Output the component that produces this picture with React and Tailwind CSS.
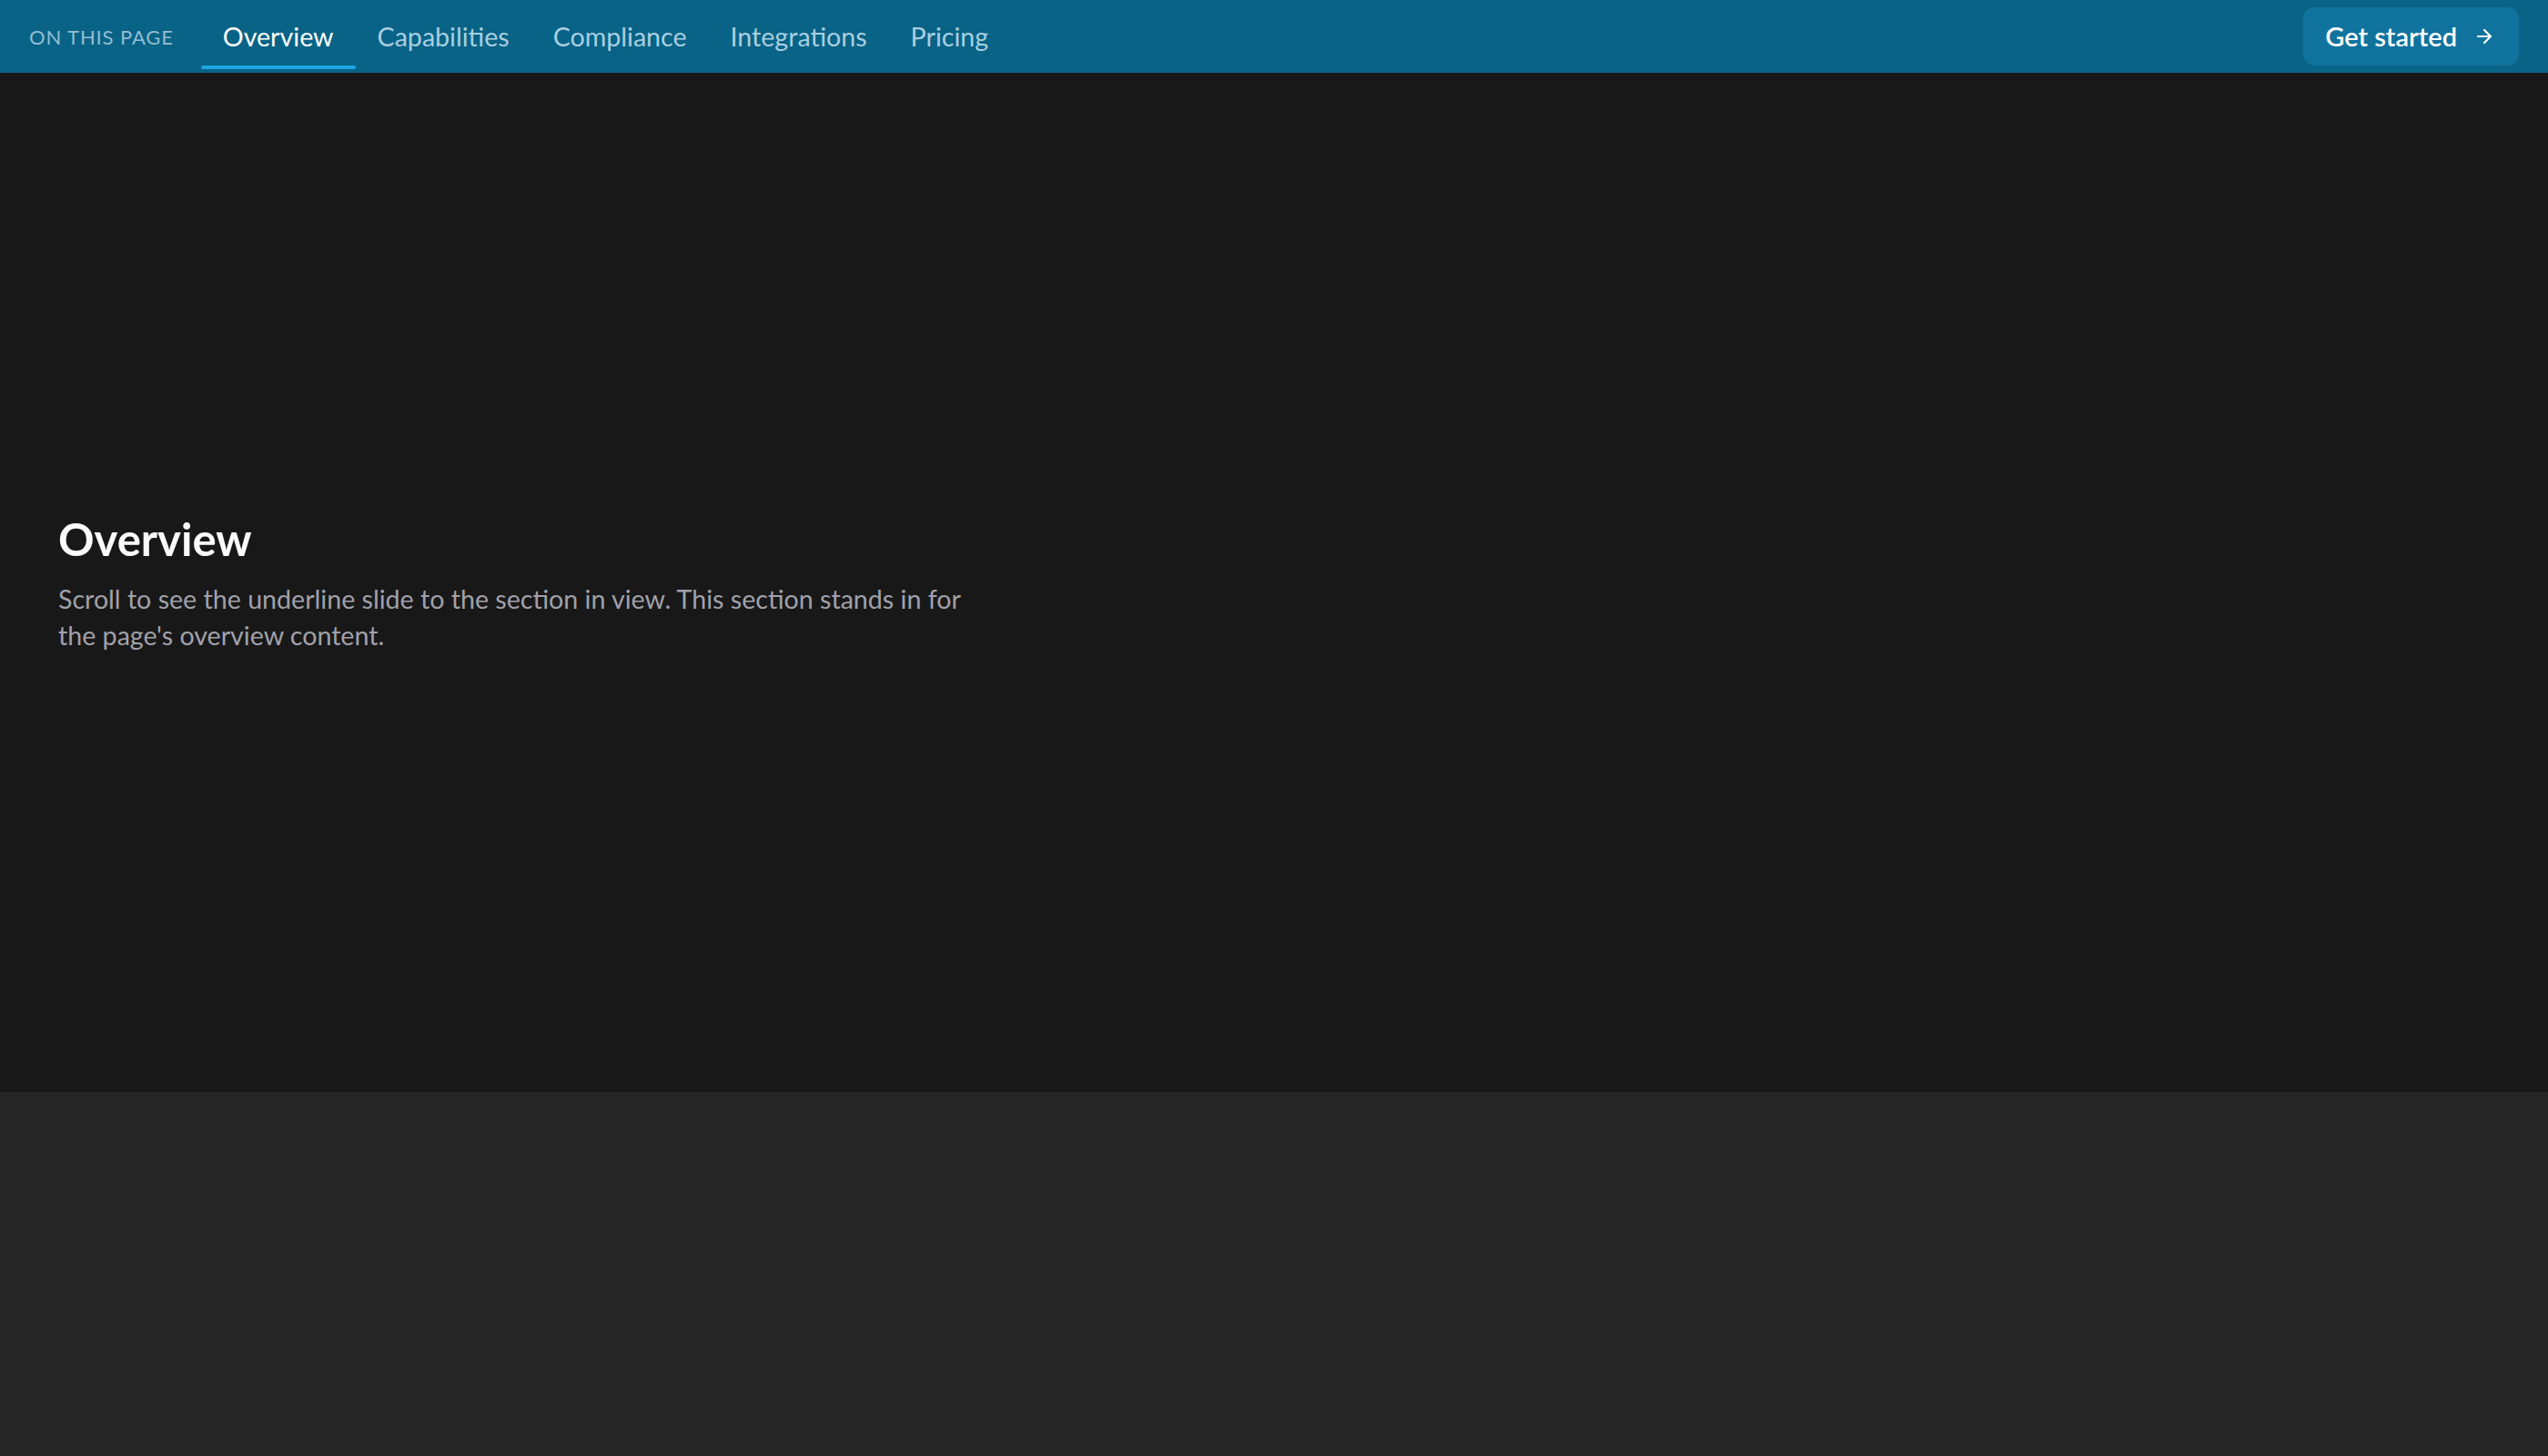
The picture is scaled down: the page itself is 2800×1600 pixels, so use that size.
import React from "react";

const items = ["Overview", "Capabilities", "Compliance", "Integrations", "Pricing"];

function Arrow() {
  return (
    <svg width="24" height="24" viewBox="0 0 24 24" fill="none" stroke="currentColor" strokeWidth="2.2" strokeLinecap="round" strokeLinejoin="round">
      <path d="M5 12h14" />
      <path d="m12 5 7 7-7 7" />
    </svg>
  );
}

export default function App() {
  return (
    <div className="h-screen overflow-hidden flex flex-col bg-[#262626]" style={{ fontFamily: "Lato, 'Noto Sans', sans-serif" }}>
      <header className="h-[80px] shrink-0 bg-[#086386] flex items-center justify-between pl-[32px] pr-[32px]">
        <nav className="flex items-stretch h-full">
          <span className="self-center text-[22px] uppercase tracking-[0.04em] text-[#93bdd1] mr-[30px]">On this page</span>
          {items.map((it, i) => (
            <a key={it} className={"relative flex items-center px-[24px] text-[28.6px] " + (i === 0 ? "text-white" : "text-[#a9cfe0]")}>
              {it}
              {i === 0 && <span className="absolute left-0 right-0 bottom-[4px] h-[4px] rounded-full bg-[#1fa6e0]" />}
            </a>
          ))}
        </nav>
        <button className="h-[64px] flex items-center gap-[18px] pl-[24px] pr-[26px] rounded-[12px] bg-[#10739d] text-white text-[29px] font-semibold">
          Get started
          <Arrow />
        </button>
      </header>
      <section className="h-[1120px] shrink-0 bg-[#181818] flex items-center px-[64px]">
        <div className="max-w-[1020px]">
          <h2 className="text-[49px] leading-[60px] font-bold text-[#fafafa]">Overview</h2>
          <p className="mt-[16px] text-[28.6px] leading-[40px] text-[#a1a1aa]">
            Scroll to see the underline slide to the section in view. This section stands in for the page's overview content.
          </p>
        </div>
      </section>
      <section className="h-[1120px] shrink-0 bg-[#262626]" />
    </div>
  );
}
